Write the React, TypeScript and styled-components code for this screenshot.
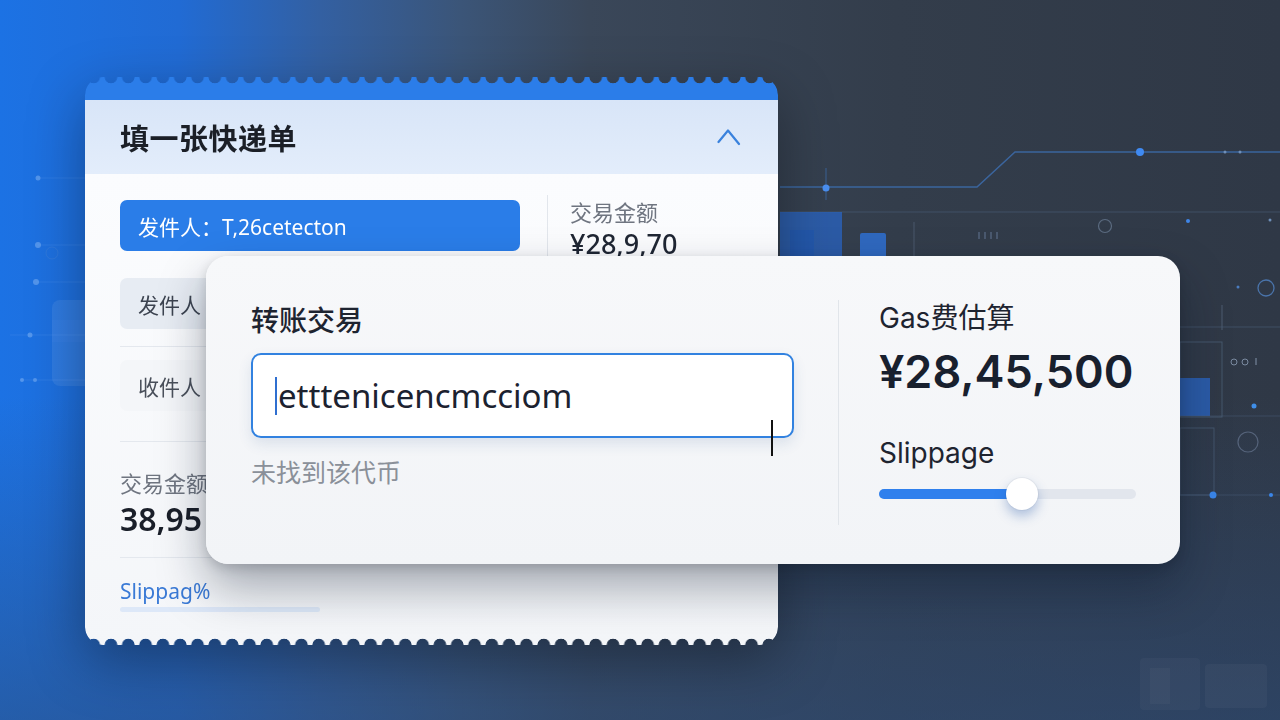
import React from "react";
import styled, { createGlobalStyle } from "styled-components";

const GlobalStyle = createGlobalStyle`
  html, body { margin: 0; padding: 0; }
  body { font-family: "Noto Sans", "Noto Sans CJK SC", sans-serif; }
  * { box-sizing: border-box; }
`;

const Page = styled.div`
  position: relative;
  width: 1280px;
  height: 720px;
  overflow: hidden;
  background:
    linear-gradient(180deg, rgba(40, 60, 95, 0) 55%, rgba(44, 76, 122, 0.55) 100%),
    linear-gradient(90deg, #1c72e4 0%, #216bd4 14%, #3360a2 25%, #3b5578 36%, #3a4759 46%, #333d4b 70%, #2f3846 100%);
`;

const Decor = styled.svg`
  position: absolute;
  inset: 0;
  z-index: 0;
`;

const Stage = styled.div`
  position: relative;
  z-index: 1;
  padding: 77px 0 0 85px;
`;

const BackWrap = styled.div`
  width: 693px;
  filter: drop-shadow(0 18px 28px rgba(0, 0, 0, 0.35));
`;

const notchMask = `
  radial-gradient(circle at 50% 0, transparent 6px, #000 6.6px) 0 0 / 17.325px 51% repeat-x,
  radial-gradient(circle at 50% 100%, transparent 6px, #000 6.6px) 0 100% / 17.325px 51% repeat-x
`;

const BackCard = styled.div`
  height: 568px;
  border-radius: 18px;
  overflow: hidden;
  display: flex;
  flex-direction: column;
  -webkit-mask: ${notchMask};
  mask: ${notchMask};
`;

const TopBand = styled.div`
  height: 23px;
  background: #2b7de9;
`;

const Header = styled.div`
  height: 74px;
  display: flex;
  align-items: center;
  justify-content: space-between;
  padding: 0 37px 0 35px;
  background: linear-gradient(180deg, #d8e5f8, #e3edfb);
`;

const Title = styled.h1`
  margin: 0;
  font-size: 29px;
  font-weight: 700;
  color: #1b1f27;
  letter-spacing: 0.5px;
`;

const Body = styled.div`
  flex: 1;
  padding: 26px 43px 0 35px;
  background: linear-gradient(180deg, #fbfcfe, #f4f6f9);
`;

const TopRow = styled.div`
  height: 51px;
  display: flex;
  align-items: flex-start;
`;

const tones = {
  blue: { bg: "#2a7de8", fg: "#ffffff" },
  gray: { bg: "#e7ecf3", fg: "#3c4350" },
  faint: { bg: "#f4f6f9", fg: "#4a505b" },
};

const Pill = styled.div<{ $tone: keyof typeof tones; $gap?: number }>`
  width: 400px;
  height: 51px;
  flex-shrink: 0;
  margin-top: ${({ $gap }) => $gap ?? 0}px;
  border-radius: 7px;
  display: flex;
  align-items: center;
  padding-left: 18px;
  font-size: 21px;
  background: ${({ $tone }) => tones[$tone].bg};
  color: ${({ $tone }) => tones[$tone].fg};
`;

const VLine = styled.div`
  width: 1px;
  height: 62px;
  flex-shrink: 0;
  margin: -5px 22px 0 27px;
  background: #e2e6ec;
`;

const AmountCol = styled.div`
  display: flex;
  flex-direction: column;
  margin-top: -3px;
`;

const Label = styled.div`
  font-size: 22px;
  line-height: 30px;
  color: #6f7580;
`;

const Amount = styled.div`
  font-size: 27px;
  line-height: 34px;
  font-weight: 500;
  color: #1f2633;
`;

const Rule = styled.div<{ $top: number; $bottom: number }>`
  height: 1px;
  background: #e4e8ee;
  margin: ${({ $top, $bottom }) => `${$top}px 0 ${$bottom}px`};
`;

const BigNumber = styled.div`
  margin-top: 2px;
  font-size: 32px;
  line-height: 38px;
  font-weight: 600;
  color: #1a1f29;
`;

const SlipText = styled.div`
  font-size: 21px;
  line-height: 28px;
  color: #3a7ad6;
`;

const SlipBar = styled.div`
  margin-top: 2px;
  width: 200px;
  height: 5px;
  border-radius: 3px;
  background: #dde8f8;
`;

const FrontCard = styled.div`
  position: absolute;
  left: 206px;
  top: 256px;
  width: 974px;
  height: 308px;
  border-radius: 22px;
  display: flex;
  padding: 46px 44px 0 45px;
  background: linear-gradient(180deg, #f7f8fa, #f2f4f7);
  box-shadow: 0 24px 48px rgba(10, 20, 40, 0.35), 0 4px 12px rgba(0, 0, 0, 0.15);
`;

const LeftCol = styled.div`
  width: 543px;
  display: flex;
  flex-direction: column;
`;

const CardTitle = styled.div`
  font-size: 28px;
  line-height: 36px;
  font-weight: 500;
  color: #1e2430;
`;

const InputBox = styled.div`
  margin-top: 15px;
  height: 85px;
  border: 2.5px solid #3282e0;
  border-radius: 10px;
  background: #fff;
  box-shadow: 0 6px 14px rgba(40, 80, 140, 0.12);
  display: flex;
  align-items: center;
  padding-left: 22px;
  font-size: 33px;
  color: #1c2230;
`;

const Caret = styled.span`
  width: 2px;
  height: 38px;
  margin-right: 1px;
  background: #2f6fd0;
`;

const Hint = styled.div`
  margin-top: 17px;
  font-size: 25px;
  line-height: 34px;
  color: #8a9099;
`;

const IBeam = styled.div`
  position: absolute;
  left: 565px;
  top: 164px;
  width: 2px;
  height: 36px;
  background: #111;
`;

const Divider = styled.div`
  width: 1px;
  height: 225px;
  margin: -2px 40px 0 44px;
  background: #e1e5ea;
`;

const RightCol = styled.div`
  width: 257px;
  display: flex;
  flex-direction: column;
`;

const SideLabel = styled.div<{ $gap: number }>`
  margin-top: ${({ $gap }) => $gap}px;
  font-family: Inter, "Noto Sans CJK SC", sans-serif;
  font-size: 28px;
  line-height: 36px;
  color: #1e2430;
`;

const GasValue = styled.div`
  margin-top: 10px;
  font-family: Inter, "Noto Sans", sans-serif;
  font-size: 45px;
  line-height: 52px;
  font-weight: 600;
  color: #18202e;
`;

const Slider = styled.div`
  position: relative;
  margin-top: 7px;
  height: 32px;
  display: flex;
  align-items: center;
`;

const Track = styled.div`
  width: 100%;
  height: 10px;
  border-radius: 5px;
  background: #e2e6ed;
  overflow: hidden;
`;

const Fill = styled.div<{ $value: number }>`
  width: ${({ $value }) => $value}%;
  height: 100%;
  background: #2f80ed;
`;

const Thumb = styled.div<{ $value: number }>`
  position: absolute;
  left: calc(${({ $value }) => $value}% - 16px);
  top: 0;
  width: 32px;
  height: 32px;
  border-radius: 50%;
  background: #fff;
  box-shadow: 0 6px 12px rgba(40, 90, 170, 0.35), 0 0 0 1px rgba(0, 0, 0, 0.04);
`;

function Background() {
  const line = "#3d6fb3";
  return (
    <Decor width="1280" height="720" viewBox="0 0 1280 720">
      {/* left circuit dots */}
      <g stroke="#3f86e8" strokeOpacity="0.45" strokeWidth="1">
        <line x1="38" y1="178" x2="85" y2="178" />
        <line x1="38" y1="245" x2="85" y2="245" />
        <line x1="36" y1="282" x2="85" y2="282" />
        <line x1="10" y1="335" x2="85" y2="335" />
        <line x1="20" y1="380" x2="85" y2="380" />
      </g>
      <g fill="#6aa4f0" fillOpacity="0.7">
        <circle cx="38" cy="178" r="2.5" />
        <circle cx="38" cy="245" r="3" />
        <circle cx="36" cy="282" r="3" />
        <circle cx="30" cy="335" r="2.5" />
        <circle cx="22" cy="380" r="2" />
        <circle cx="35" cy="380" r="2" />
      </g>
      <circle cx="52" cy="253" r="6" fill="none" stroke="#4c86d8" strokeOpacity="0.35" />
      <rect x="52" y="300" width="50" height="86" rx="8" fill="#ffffff" fillOpacity="0.08" />
      <rect x="52" y="320" width="50" height="22" fill="#4a8ef0" fillOpacity="0.15" />

      {/* right circuit */}
      <path d="M780 187 H977 L1015 152 H1280" fill="none" stroke={line} strokeWidth="1.5" strokeOpacity="0.8" />
      <line x1="826" y1="168" x2="826" y2="200" stroke={line} strokeOpacity="0.7" />
      <circle cx="826" cy="188" r="3.5" fill="#4a8ff0" />
      <circle cx="1140" cy="152" r="4" fill="#3f8af2" />
      <circle cx="1225" cy="152" r="1.5" fill="#6f8fb8" />
      <circle cx="1240" cy="152" r="1.5" fill="#6f8fb8" />
      <line x1="780" y1="212" x2="1280" y2="212" stroke="#4a5d78" strokeOpacity="0.6" />
      <rect x="780" y="212" width="62" height="46" fill="#2a66c4" fillOpacity="0.75" />
      <rect x="790" y="230" width="24" height="28" fill="#1f57b0" fillOpacity="0.6" />
      <rect x="860" y="233" width="26" height="25" rx="2" fill="#2f70d2" fillOpacity="0.85" />
      <line x1="914" y1="222" x2="914" y2="258" stroke="#5a6b82" strokeOpacity="0.6" />
      <g fill="#5a6d88" fillOpacity="0.6">
        <rect x="978" y="232" width="2" height="7" />
        <rect x="984" y="232" width="2" height="7" />
        <rect x="990" y="232" width="2" height="7" />
        <rect x="996" y="232" width="2" height="7" />
      </g>
      <circle cx="1105" cy="226" r="6.5" fill="none" stroke="#5b6b80" strokeWidth="1.2" />
      <circle cx="1188" cy="221" r="2" fill="#3f86e8" />
      <circle cx="1270" cy="220" r="1.5" fill="#6f8fb8" />

      <circle cx="1266" cy="288" r="8" fill="none" stroke="#4a74ab" strokeWidth="1.3" />
      <circle cx="1238" cy="287" r="1.5" fill="#4a7cc0" />
      <line x1="1222" y1="305" x2="1222" y2="330" stroke="#5a6b82" strokeOpacity="0.7" />
      <line x1="1180" y1="327" x2="1280" y2="327" stroke="#4a5d78" strokeOpacity="0.6" />
      <rect x="1180" y="342" width="42" height="75" fill="none" stroke="#556a86" strokeOpacity="0.6" />
      <rect x="1180" y="378" width="30" height="38" fill="#2a62b8" fillOpacity="0.85" />
      <g fill="#7a8aa0" fillOpacity="0.55">
        <circle cx="1234" cy="362" r="3" fill="none" stroke="#7a8aa0" />
        <circle cx="1245" cy="362" r="3" fill="none" stroke="#7a8aa0" />
        <rect x="1255" y="358" width="2" height="7" />
      </g>
      <circle cx="1254" cy="406" r="2.5" fill="#3f8ee8" />
      <line x1="1180" y1="416" x2="1280" y2="416" stroke="#4a5d78" strokeOpacity="0.5" />
      <rect x="1180" y="428" width="34" height="67" fill="none" stroke="#556a86" strokeOpacity="0.55" />
      <circle cx="1248" cy="442" r="10" fill="none" stroke="#55637a" strokeWidth="1.2" />
      <line x1="1180" y1="495" x2="1280" y2="495" stroke="#4a5d78" strokeOpacity="0.5" />
      <circle cx="1213" cy="495" r="3.5" fill="#3a86ea" />
      <circle cx="1271" cy="495" r="2" fill="#3a86ea" />

      {/* faint blurred blocks bottom right */}
      <rect x="1140" y="658" width="60" height="52" rx="4" fill="#ffffff" fillOpacity="0.03" />
      <rect x="1150" y="668" width="20" height="36" fill="#ffffff" fillOpacity="0.03" />
      <rect x="1205" y="664" width="62" height="44" rx="4" fill="#ffffff" fillOpacity="0.035" />
    </Decor>
  );
}

function ChevronUp() {
  return (
    <svg width="24" height="18" viewBox="0 0 24 18" fill="none">
      <path d="M1.5 14 L11 2.5 L22 16" stroke="#3a82dd" strokeWidth="2.2" strokeLinecap="round" strokeLinejoin="round" />
    </svg>
  );
}

export default function App() {
  const slippage = 55.6;
  return (
    <Page>
      <GlobalStyle />
      <Background />
      <Stage>
        <BackWrap>
          <BackCard>
            <TopBand />
            <Header>
              <Title>填一张快递单</Title>
              <ChevronUp />
            </Header>
            <Body>
              <TopRow>
                <Pill $tone="blue">发件人：T,26cetecton</Pill>
                <VLine />
                <AmountCol>
                  <Label>交易金额</Label>
                  <Amount>¥28,9,70</Amount>
                </AmountCol>
              </TopRow>
              <Pill $tone="gray" $gap={27}>发件人</Pill>
              <Rule $top={17} $bottom={13} />
              <Pill $tone="faint">收件人</Pill>
              <Rule $top={30} $bottom={26} />
              <Label>交易金额</Label>
              <BigNumber>38,95</BigNumber>
              <Rule $top={19} $bottom={19} />
              <SlipText>Slippag%</SlipText>
              <SlipBar />
            </Body>
          </BackCard>
        </BackWrap>

        <FrontCard>
          <LeftCol>
            <CardTitle>转账交易</CardTitle>
            <InputBox>
              <Caret />
              etttenicencmcciom
            </InputBox>
            <Hint>未找到该代币</Hint>
          </LeftCol>
          <Divider />
          <RightCol>
            <SideLabel $gap={-2}>Gas费估算</SideLabel>
            <GasValue>¥28,45,500</GasValue>
            <SideLabel $gap={37}>Slippage</SideLabel>
            <Slider>
              <Track>
                <Fill $value={slippage} />
              </Track>
              <Thumb $value={slippage} />
            </Slider>
          </RightCol>
          <IBeam />
        </FrontCard>
      </Stage>
    </Page>
  );
}
